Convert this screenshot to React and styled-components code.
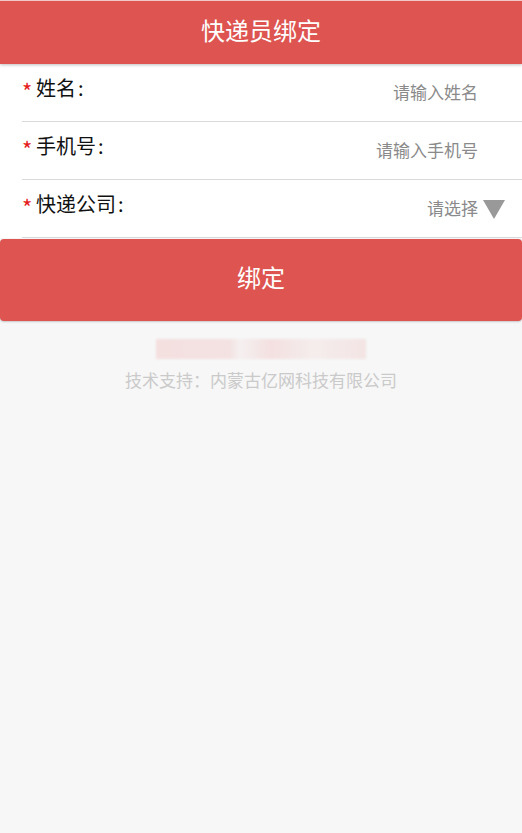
import React from 'react'
import styled, { createGlobalStyle } from 'styled-components'

const GlobalStyle = createGlobalStyle`
    html, body {
        margin: 0;
        padding: 0;
        background: #f7f7f7;
        font-family: "Noto Sans CJK SC", "Noto Sans", sans-serif;
    }
`

const fields = [
    { label: '姓名', placeholder: '请输入姓名' },
    { label: '手机号', placeholder: '请输入手机号' },
    { label: '快递公司', placeholder: '请选择', select: true },
]

const Page = styled.div`
    min-height: 833px;
    background: #f7f7f7;
`

const Header = styled.header`
    height: 64px;
    border-top: 1px solid #f0c9c7;
    box-sizing: border-box;
    padding-bottom: 6px;
    background: #dd5450;
    color: #fff;
    display: flex;
    align-items: center;
    justify-content: center;
    font-size: 24px;
    box-shadow: 0 1px 3px rgba(0, 0, 0, 0.25);
    position: relative;
    z-index: 1;
`

const Form = styled.div`
    background: #fff;
    padding-left: 22px;
`

const Row = styled.div`
    height: 58px;
    border-bottom: 1px solid #d9d9d9;
    display: flex;
    justify-content: space-between;
    padding-top: 10px;
    box-sizing: border-box;
`

const Label = styled.div`
    display: flex;
    align-items: flex-start;
    font-size: 20px;
    line-height: 28px;
    color: #111;
    & span {
        color: #e51c1c;
        font-size: 22px;
        width: 14px;
        line-height: 32px;
    }
    & em {
        font-style: normal;
        margin-left: 2px;
    }
`

const Value = styled.div`
    display: flex;
    align-items: center;
    gap: 5px;
    margin-top: 3px;
    height: 28px;
    padding-right: ${(p) => (p.$select ? '17px' : '44px')};
    font-size: 17px;
    color: #8a8a8a;
`

const Arrow = styled.i`
    width: 0;
    height: 0;
    border-left: 11px solid transparent;
    border-right: 11px solid transparent;
    border-top: 19px solid #999;
    margin-top: 4px;
`

const Button = styled.button`
    display: flex;
    width: 100%;
    height: 82px;
    margin-top: 1px;
    padding: 0 0 7px;
    border: none;
    border-radius: 4px;
    background: #dd5450;
    color: #fff;
    font-family: inherit;
    font-size: 24px;
    align-items: center;
    justify-content: center;
    box-shadow: 0 1px 2px rgba(0, 0, 0, 0.2);
`

const Footer = styled.div`
    display: flex;
    flex-direction: column;
    align-items: center;
    padding-top: 18px;
`

const Blur = styled.div`
    width: 210px;
    height: 20px;
    background: linear-gradient(90deg, #f5e0e0 0%, #f4e2e2 35%, #f5f0f0 40%, #f4e0e0 55%, #f5eded 75%, #f4e4e4 100%);
    filter: blur(1px);
`

const Support = styled.div`
    margin-top: 8px;
    font-size: 17px;
    color: #cacaca;
`

const App = () => {
    return (
        <Page>
            <GlobalStyle />
            <Header>快递员绑定</Header>
            <Form>
                {fields.map((item, index) => (
                    <Row key={index}>
                        <Label><span>*</span>{item.label}<em>:</em></Label>
                        <Value $select={item.select}>
                            {item.placeholder}
                            {item.select && <Arrow />}
                        </Value>
                    </Row>
                ))}
            </Form>
            <Button>绑定</Button>
            <Footer>
                <Blur />
                <Support>技术支持：内蒙古亿网科技有限公司</Support>
            </Footer>
        </Page>
    )
}

export default App
